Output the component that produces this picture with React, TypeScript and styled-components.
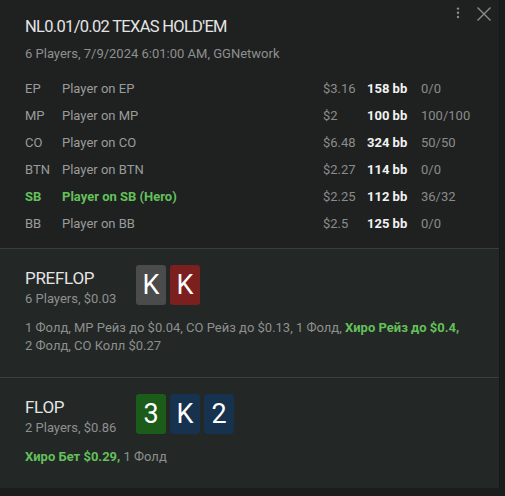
import React from "react";
import styled, { createGlobalStyle } from "styled-components";

const Global = createGlobalStyle`
  html, body { margin: 0; padding: 0; background: #191c1b; }
  body { font-family: Roboto, "Noto Sans", sans-serif; }
`;

const Page = styled.div`
  display: flex;
  width: 505px;
  height: 496px;
  background: #1a1d1c;
`;

const Panel = styled.div`
  width: 500px;
  height: 488px;
  display: flex;
  flex-direction: column;
  background: #1e2120;
  border-right: 1px solid #141716;
  box-sizing: border-box;
`;

const Header = styled.div`
  display: flex;
  justify-content: space-between;
  align-items: flex-start;
  padding: 15px 8px 0 25px;
`;

const TitleBlock = styled.div`
  display: flex;
  flex-direction: column;
  gap: 5px;
`;

const Title = styled.div`
  font-size: 16.5px;
  letter-spacing: -0.7px;
  line-height: 24px;
  color: #e4e4e4;
`;

const Sub = styled.div`
  font-size: 13px;
  line-height: 20px;
  color: #8e908f;
`;

const Icons = styled.div`
  display: flex;
  align-items: flex-start;
  gap: 17px;
  margin-top: -8px;
  color: #8a8d8c;
`;

const PlayerGrid = styled.div`
  display: grid;
  grid-template-columns: 37px 261px 44px 54px auto;
  grid-auto-rows: 27px;
  align-items: center;
  padding: 11px 25px 11px 25px;
  font-size: 13px;
`;

const Cell = styled.div<{ $kind?: "pos" | "name" | "stack" | "bb" | "ratio"; $hero?: boolean }>`
  white-space: nowrap;
  color: ${(p) =>
    p.$kind === "bb" ? "#f2f2f2" : p.$hero ? "#64c05a" : p.$kind === "stack" || p.$kind === "ratio" ? "#8a8c8b" : "#9a9c9b"};
  font-weight: ${(p) => (p.$kind === "bb" || p.$hero ? 700 : 400)};
`;

const Section = styled.div<{ $bottom: number }>`
  display: flex;
  flex-direction: column;
  gap: 10px;
  background: #232726;
  border-top: 1px solid #3a3e3d;
  padding: 16px 25px ${(p) => p.$bottom}px 25px;
`;

const StreetRow = styled.div`
  display: flex;
  align-items: flex-start;
`;

const StreetInfo = styled.div`
  width: 111px;
  display: flex;
  flex-direction: column;
  padding-top: 2px;
`;

const StreetName = styled.div`
  font-size: 17px;
  letter-spacing: -0.3px;
  line-height: 22px;
  color: #e4e4e4;
`;

const Cards = styled.div`
  display: flex;
  gap: 4px;
`;

const Card = styled.div<{ $color: string }>`
  width: 30px;
  height: 40px;
  border-radius: 3px;
  background: ${(p) => p.$color};
  color: #ffffff;
  font-size: 27px;
  line-height: 40px;
  text-align: center;
`;

const Actions = styled.div`
  font-size: 13px;
  line-height: 18px;
  color: #8e908f;
`;

const Hero = styled.span`
  color: #64c05a;
  font-weight: 700;
`;

const players = [
  { pos: "EP", name: "Player on EP", stack: "$3.16", bb: "158 bb", ratio: "0/0" },
  { pos: "MP", name: "Player on MP", stack: "$2", bb: "100 bb", ratio: "100/100" },
  { pos: "CO", name: "Player on CO", stack: "$6.48", bb: "324 bb", ratio: "50/50" },
  { pos: "BTN", name: "Player on BTN", stack: "$2.27", bb: "114 bb", ratio: "0/0" },
  { pos: "SB", name: "Player on SB (Hero)", stack: "$2.25", bb: "112 bb", ratio: "36/32", hero: true },
  { pos: "BB", name: "Player on BB", stack: "$2.5", bb: "125 bb", ratio: "0/0" },
];

const Dots = () => (
  <svg width="4" height="14" viewBox="0 0 4 14">
    <circle cx="2" cy="1.6" r="1.2" fill="currentColor" />
    <circle cx="2" cy="5.8" r="1.2" fill="currentColor" />
    <circle cx="2" cy="10" r="1.2" fill="currentColor" />
  </svg>
);

const Close = () => (
  <svg width="14" height="14" viewBox="0 0 14 14">
    <path d="M0.5 0.5 L13.5 13.5 M13.5 0.5 L0.5 13.5" stroke="currentColor" strokeWidth="1.4" />
  </svg>
);

export default function App() {
  return (
    <>
      <Global />
      <Page>
        <Panel>
          <Header>
            <TitleBlock>
              <Title>NL0.01/0.02 TEXAS HOLD'EM</Title>
              <Sub>6 Players, 7/9/2024 6:01:00 AM, GGNetwork</Sub>
            </TitleBlock>
            <Icons>
              <Dots />
              <Close />
            </Icons>
          </Header>
          <PlayerGrid>
            {players.map((p) => (
              <React.Fragment key={p.pos}>
                <Cell $kind="pos" $hero={p.hero}>{p.pos}</Cell>
                <Cell $kind="name" $hero={p.hero}>{p.name}</Cell>
                <Cell $kind="stack">{p.stack}</Cell>
                <Cell $kind="bb">{p.bb}</Cell>
                <Cell $kind="ratio">{p.ratio}</Cell>
              </React.Fragment>
            ))}
          </PlayerGrid>
          <Section $bottom={22}>
            <StreetRow>
              <StreetInfo>
                <StreetName>PREFLOP</StreetName>
                <Sub>6 Players, $0.03</Sub>
              </StreetInfo>
              <Cards>
                <Card $color="#4a4b4b">K</Card>
                <Card $color="#7c1f1f">K</Card>
              </Cards>
            </StreetRow>
            <Actions>
              1 Фолд, MP Рейз до $0.04, CO Рейз до $0.13, 1 Фолд, <Hero>Хиро Рейз до $0.4,</Hero>
              <br />2 Фолд, CO Колл $0.27
            </Actions>
          </Section>
          <Section $bottom={22}>
            <StreetRow>
              <StreetInfo>
                <StreetName>FLOP</StreetName>
                <Sub>2 Players, $0.86</Sub>
              </StreetInfo>
              <Cards>
                <Card $color="#1b5c1b">3</Card>
                <Card $color="#16324e">K</Card>
                <Card $color="#16324e">2</Card>
              </Cards>
            </StreetRow>
            <Actions>
              <Hero>Хиро Бет $0.29,</Hero> 1 Фолд
            </Actions>
          </Section>
        </Panel>
      </Page>
    </>
  );
}
